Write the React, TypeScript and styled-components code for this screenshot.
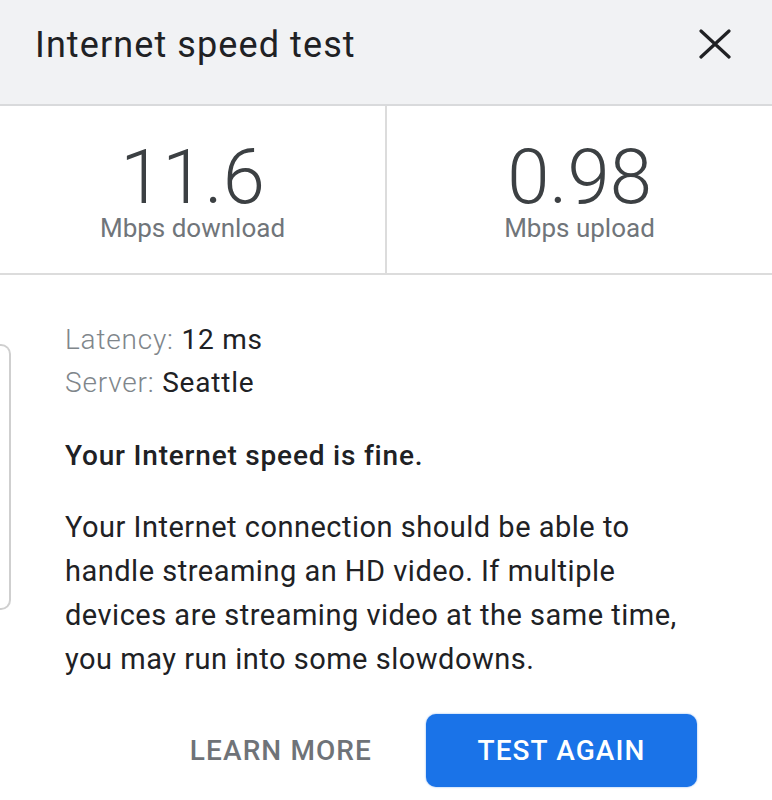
import React from "react";
import styled, { createGlobalStyle } from "styled-components";

const Global = createGlobalStyle`
  html, body { margin: 0; padding: 0; background: #ffffff; }
  body { font-family: Roboto, "Liberation Sans", Arial, sans-serif; color: #202124; }
  * { box-sizing: border-box; }
`;

const Page = styled.div`
  width: 772px;
  height: 800px;
  overflow: hidden;
  display: flex;
  flex-direction: column;
  background: #fff;
`;

const Header = styled.header`
  height: 106px;
  flex-shrink: 0;
  background: #f1f2f4;
  border-bottom: 2px solid #d9dadc;
  display: flex;
  align-items: flex-start;
  justify-content: space-between;
  padding: 25px 39px 0 35px;
`;

const Title = styled.h1`
  margin: 0;
  font-size: 36px;
  line-height: 40px;
  font-weight: 400;
  letter-spacing: 1.1px;
  color: #202124;
`;

const CloseButton = styled.button`
  width: 36px;
  height: 38px;
  border: none;
  background: transparent;
  padding: 0;
  display: flex;
  align-items: center;
  justify-content: center;
  color: #202124;
`;

const Stats = styled.section`
  display: grid;
  grid-template-columns: 385px 2px 1fr;
  border-bottom: 2px solid #dcdcdc;
  flex-shrink: 0;
`;

const Divider = styled.div`
  background: #dcdcdc;
`;

const Stat = styled.div`
  display: flex;
  flex-direction: column;
  align-items: center;
  padding: 36px 0 29px;
`;

const StatValue = styled.div`
  font-size: 76px;
  line-height: 70px;
  font-weight: 300;
  color: #3c4043;
`;

const StatLabel = styled.div`
  font-size: 26px;
  line-height: 32px;
  font-weight: 400;
  color: #70757a;
`;

const Body = styled.div`
  display: flex;
  align-items: flex-start;
  flex: 1;
`;

const PeekCard = styled.div`
  width: 11px;
  height: 266px;
  margin-top: 69px;
  flex-shrink: 0;
  border: 2px solid #cfcfcf;
  border-left: none;
  border-radius: 0 10px 10px 0;
`;

const Content = styled.div`
  padding: 43px 0 0 54px;
  display: flex;
  flex-direction: column;
  flex: 1;
`;

const InfoLine = styled.div`
  font-size: 28px;
  line-height: 43px;
  letter-spacing: 0.8px;
  color: #202124;
`;

const InfoKey = styled.span`
  color: #80868b;
  font-weight: 300;
`;

const Verdict = styled.div`
  margin-top: 30px;
  font-size: 28px;
  line-height: 43px;
  font-weight: 500;
  letter-spacing: 0.8px;
  color: #202124;
`;

const Paragraph = styled.p`
  margin: 28px 0 0;
  font-size: 29px;
  line-height: 44px;
  letter-spacing: 0.5px;
  color: #202124;
  width: 620px;
`;

const Actions = styled.div`
  margin-top: 33px;
  display: flex;
  justify-content: flex-end;
  align-items: center;
  gap: 30px;
  padding-right: 75px;
  margin-left: -65px;
`;

const Button = styled.button<{ $primary?: boolean }>`
  height: 73px;
  border: none;
  border-radius: 10px;
  padding: 0 ${(p) => (p.$primary ? "48px" : "24px")};
  min-width: ${(p) => (p.$primary ? "271px" : "0")};
  font-family: Roboto, "Liberation Sans", Arial, sans-serif;
  font-size: 28px;
  font-weight: 500;
  letter-spacing: 1.1px;
  background: ${(p) => (p.$primary ? "#1a73e8" : "transparent")};
  color: ${(p) => (p.$primary ? "#ffffff" : "#6f7378")};
  box-shadow: ${(p) => (p.$primary ? "0 0 2px rgba(26,115,232,0.6)" : "none")};
`;

export default function App() {
  return (
    <>
      <Global />
      <Page>
        <Header>
          <Title>Internet speed test</Title>
          <CloseButton aria-label="Close">
            <svg width="32" height="30" viewBox="0 0 32 30" fill="none">
              <path d="M2 2 L30 28 M30 2 L2 28" stroke="#202124" strokeWidth="3.2" strokeLinecap="round" />
            </svg>
          </CloseButton>
        </Header>
        <Stats>
          <Stat>
            <StatValue>11.6</StatValue>
            <StatLabel>Mbps download</StatLabel>
          </Stat>
          <Divider />
          <Stat>
            <StatValue>0.98</StatValue>
            <StatLabel>Mbps upload</StatLabel>
          </Stat>
        </Stats>
        <Body>
          <PeekCard />
          <Content>
            <InfoLine>
              <InfoKey>Latency:</InfoKey> 12 ms
            </InfoLine>
            <InfoLine>
              <InfoKey>Server:</InfoKey> Seattle
            </InfoLine>
            <Verdict>Your Internet speed is fine.</Verdict>
            <Paragraph>
              Your Internet connection should be able to handle streaming an HD video. If multiple devices are
              streaming video at the same time, you may run into some slowdowns.
            </Paragraph>
            <Actions>
              <Button>LEARN MORE</Button>
              <Button $primary>TEST AGAIN</Button>
            </Actions>
          </Content>
        </Body>
      </Page>
    </>
  );
}
